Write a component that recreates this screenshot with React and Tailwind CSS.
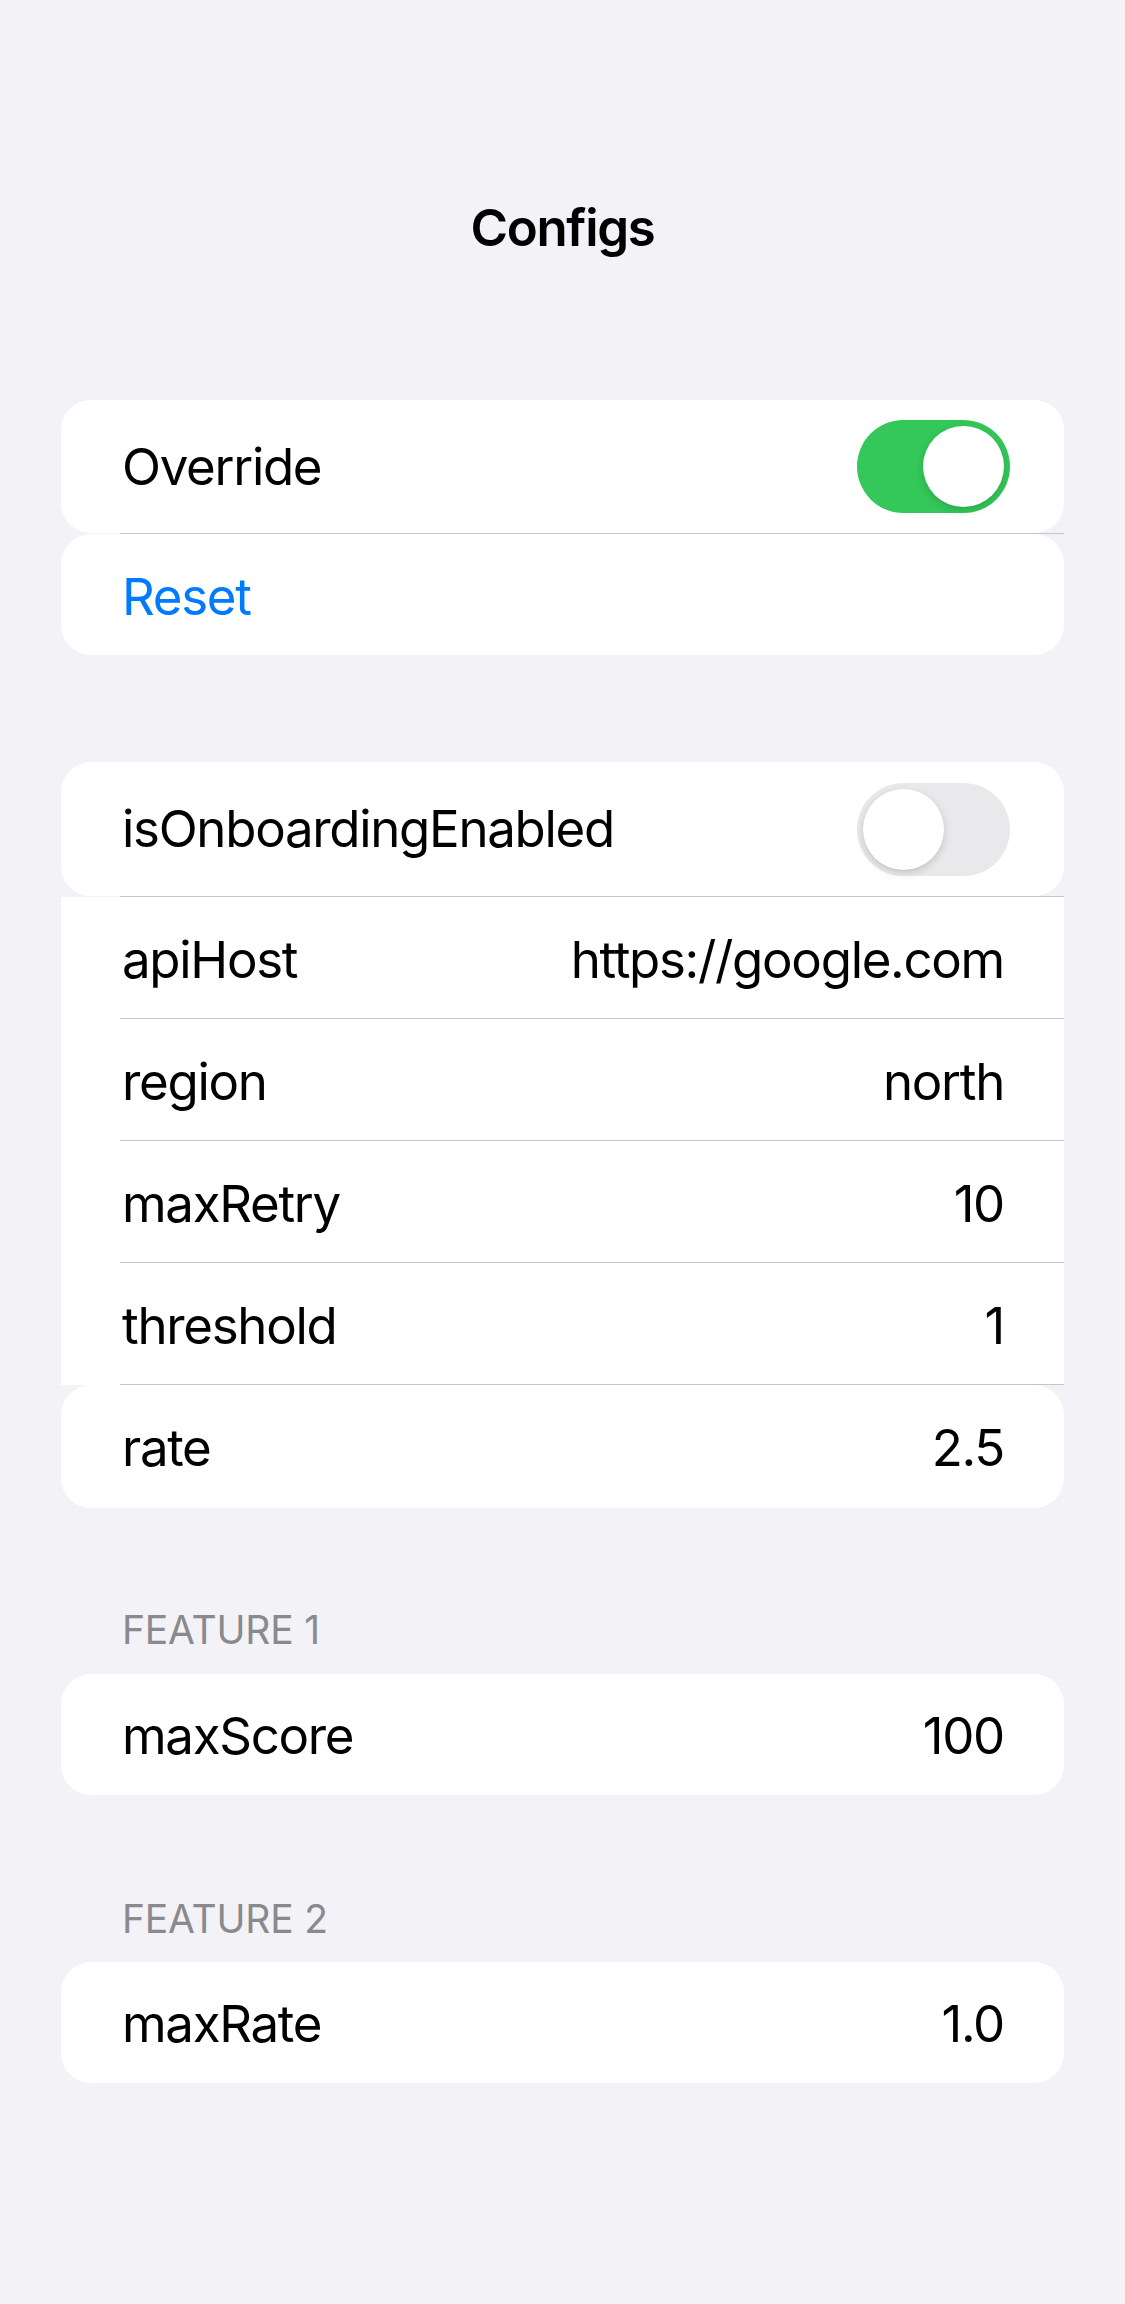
const FONT = "font-['Inter','Noto_Sans',sans-serif]"

const GROUP_MAIN = [
  { label: 'apiHost', value: 'https://google.com' },
  { label: 'region', value: 'north' },
  { label: 'maxRetry', value: '10' },
  { label: 'threshold', value: '1' },
]

function Toggle({ on }) {
  return (
    <div
      className={`w-[153px] h-[93px] rounded-full p-[6px] flex ${on ? 'bg-[#34c759] justify-end' : 'bg-[#e9e9eb] justify-start'}`}
    >
      <div className="w-[81px] h-[81px] rounded-full bg-white shadow-[0_3px_8px_rgba(0,0,0,0.15),0_1px_1px_rgba(0,0,0,0.06)]" />
    </div>
  )
}

function Separator() {
  return <div className="ml-[59px] h-px bg-[#c6c6c8]" />
}

function ValueRow({ label, value, className = '' }) {
  return (
    <div className={`flex items-center justify-between pl-[61px] pr-[60px] bg-white ${className}`}>
      <span>{label}</span>
      <span>{value}</span>
    </div>
  )
}

function Header({ children }) {
  return (
    <p className="pl-[122px] text-[39px] leading-[47px] uppercase text-[#8a8a8e] tracking-[-0.2px]">
      {children}
    </p>
  )
}

export default function App() {
  return (
    <div className={`${FONT} min-h-[2304px] w-full bg-[#f2f2f7] text-black text-[51px] leading-[62px] tracking-[-1.3px]`}>
      {/* Nav title */}
      <div className="pt-[197px] h-[258px] text-center font-semibold leading-[61px]">Configs</div>

      {/* Override group */}
      <div className="mt-[142px] mx-[61px] flex flex-col">
        <div className="h-[133px] bg-white rounded-[30px] flex items-center justify-between pl-[61px] pr-[54px]">
          <span>Override</span>
          <Toggle on />
        </div>
        <Separator />
        <div className="h-[121px] bg-white rounded-[30px] flex items-center pl-[61px] pt-[4px] text-[#007aff]">
          Reset
        </div>
      </div>

      {/* Config group */}
      <div className="mt-[107px] mx-[61px] flex flex-col">
        <div className="h-[134px] bg-white rounded-[30px] flex items-center justify-between pl-[61px] pr-[54px]">
          <span>isOnboardingEnabled</span>
          <Toggle />
        </div>
        <Separator />
        <div className="bg-white flex flex-col">
          {GROUP_MAIN.map(({ label, value }) => (
            <div key={label} className="flex flex-col">
              <ValueRow label={label} value={value} className="h-[121px] pt-[4px]" />
              <Separator />
            </div>
          ))}
        </div>
        <ValueRow label="rate" value="2.5" className="h-[123px] rounded-[30px] pt-[2px]" />
      </div>

      {/* Feature 1 */}
      <div className="mt-[98px]">
        <Header>Feature 1</Header>
      </div>
      <div className="mt-[21px] mx-[61px]">
        <ValueRow label="maxScore" value="100" className="h-[121px] rounded-[30px] pt-[2px]" />
      </div>

      {/* Feature 2 */}
      <div className="mt-[100px]">
        <Header>Feature 2</Header>
      </div>
      <div className="mt-[20px] mx-[61px]">
        <ValueRow label="maxRate" value="1.0" className="h-[121px] rounded-[30px] pt-[2px]" />
      </div>
    </div>
  )
}
